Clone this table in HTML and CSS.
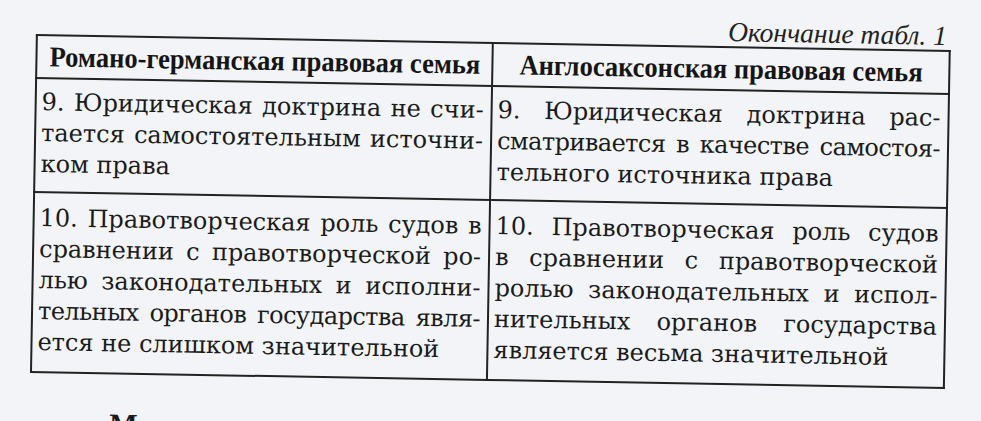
FILE: index.html
```html
<!DOCTYPE html>
<html lang="ru">
<head>
<meta charset="utf-8">
<title>Окончание табл. 1</title>
<link rel="stylesheet" href="styles.css">
</head>
<body>
<div class="page">
  <div class="caption">Окончание табл. 1</div>
  <table class="tbl">
    <colgroup><col class="c1"><col class="c2"></colgroup>
    <thead>
      <tr>
        <th><span class="hd">Романо-германская правовая семья</span></th>
        <th><span class="hd">Англосаксонская правовая семья</span></th>
      </tr>
    </thead>
    <tbody>
      <tr class="r9">
        <td>
          <span class="ln">9. Юридическая доктрина не счи-</span>
          <span class="ln">тается самостоятельным источни-</span>
          <span class="ln last">ком права</span>
        </td>
        <td>
          <span class="ln">9. Юридическая доктрина рас-</span>
          <span class="ln tight">сматривается в качестве самостоя-</span>
          <span class="ln last">тельного источника права</span>
        </td>
      </tr>
      <tr class="r10">
        <td>
          <span class="ln">10. Правотворческая роль судов в</span>
          <span class="ln">сравнении с правотворческой ро-</span>
          <span class="ln">лью законодательных и исполни-</span>
          <span class="ln tight">тельных органов государства явля-</span>
          <span class="ln last">ется не слишком значительной</span>
        </td>
        <td>
          <span class="ln">10. Правотворческая роль судов</span>
          <span class="ln">в сравнении с правотворческой</span>
          <span class="ln">ролью законодательных и испол-</span>
          <span class="ln">нительных органов государства</span>
          <span class="ln last">является весьма значительной</span>
        </td>
      </tr>
    </tbody>
  </table>
  <p class="next">М</p>
</div>
</body>
</html>
```

FILE: styles.css
```css
html, body {
  margin: 0;
  padding: 0;
}
body {
  background: #f2f4f7;
  color: #1b1b1b;
  font-family: "Liberation Serif", "Times New Roman", serif;
  width: 981px;
  height: 421px;
  overflow: hidden;
}
.page {
  width: 913px;
  margin-left: 36px;
  padding-top: 6px;
  transform: rotate(1deg);
  transform-origin: 0 28px;
}
.caption {
  text-align: right;
  font-style: italic;
  font-size: 27.5px;
  line-height: 28px;
  padding-right: 2px;
  color: #222;
}
.tbl {
  width: 913px;
  border-collapse: collapse;
  table-layout: fixed;
  border: 2px solid #222;
}
.c1 { width: 456px; }
.c2 { width: 457px; }
.tbl th, .tbl td {
  border: 2px solid #222;
  vertical-align: top;
}
.tbl th {
  height: 41px;
  padding: 0;
  font-weight: bold;
  font-size: 28.5px;
  line-height: 41px;
  text-align: center;
  white-space: nowrap;
  overflow: hidden;
  color: #151515;
}
.hd {
  display: inline-block;
  margin: 0 -40px;
  transform: scaleX(0.93);
}
.tbl td {
  padding: 8px 7px 0 5px;
  font-family: "DejaVu Serif", "Liberation Serif", serif;
  font-size: 24px;
  line-height: 31px;
}
.r9 td { height: 104px; }
.r10 td { height: 168px; padding-top: 10px; }
.ln {
  display: block;
  text-align: justify;
  text-align-last: justify;
  white-space: nowrap;
}
.ln.tight {
  letter-spacing: -0.55px;
  word-spacing: -2px;
}
.ln.last {
  text-align: left;
  text-align-last: left;
}
.next {
  margin: 30px 0 0 80px;
  font-size: 30px;
  font-weight: bold;
  line-height: 40px;
}
```
